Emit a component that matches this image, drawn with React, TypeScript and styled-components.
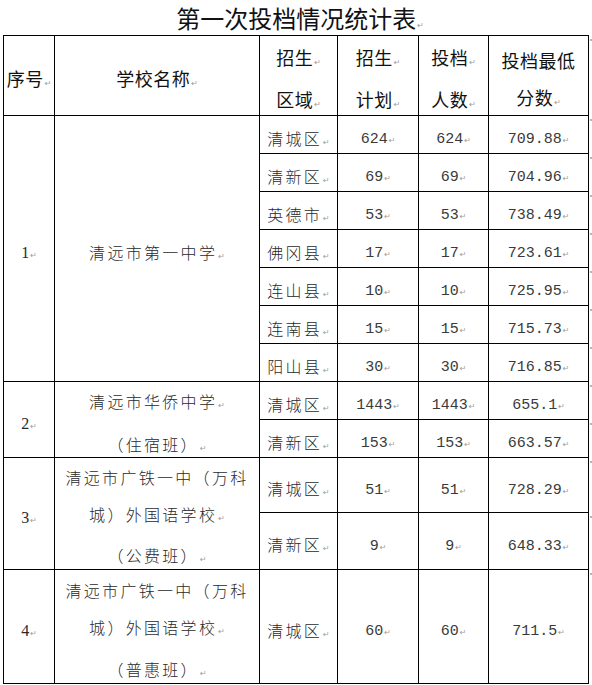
import { FC } from 'react';
import styled, { createGlobalStyle } from 'styled-components';

const GlobalStyle = createGlobalStyle`
  html, body {
    margin: 0;
    padding: 0;
    background: #ffffff;
  }
  body {
    font-family: "Noto Sans CJK SC", "Noto Sans", sans-serif;
    color: #222;
  }
`;

const Page = styled.div`
  width: 592px;
  height: 685px;
  overflow: hidden;
  background: #fff;
`;

const Title = styled.h1`
  margin: 0;
  height: 35px;
  line-height: 35px;
  text-align: center;
  font-size: 24px;
  font-weight: 400;
  color: #111;
  padding-left: 8px;
`;

const Sheet = styled.div`
  display: grid;
  grid-template-columns: 50px 204px 77px 80px 69px 99px;
  grid-template-rows: 79px repeat(9, 37px) 54px 56px 113px;
  gap: 1px;
  padding: 1px;
  margin-left: 3px;
  width: max-content;
  background: #000;
`;

type Kind = 'head' | 'text' | 'num' | 'seq';

const Cell = styled.div<{ $span?: number; $kind: Kind; $end?: boolean }>`
  position: relative;
  grid-row: span ${(p) => p.$span ?? 1};
  display: flex;
  flex-direction: column;
  align-items: center;
  justify-content: center;
  padding-top: 11px;
  background: #fff;
  white-space: nowrap;
  color: ${(p) => (p.$kind === 'head' ? '#111' : p.$kind === 'num' ? '#3a3a3a' : '#2a2a2a')};
  font-family: ${(p) =>
    p.$kind === 'num'
      ? '"Liberation Mono", monospace'
      : p.$kind === 'seq'
      ? '"Liberation Serif", serif'
      : '"Noto Sans CJK SC", sans-serif'};
  font-size: ${(p) =>
    p.$kind === 'head' ? '18px' : p.$kind === 'text' ? '16px' : p.$kind === 'seq' ? '16px' : '15px'};
  font-weight: ${(p) => (p.$kind === 'text' ? 300 : 400)};
  letter-spacing: ${(p) => (p.$kind === 'text' ? '2.3px' : p.$kind === 'head' ? '0.5px' : '0')};

  &::after {
    content: '';
    display: ${(p) => (p.$end ? 'block' : 'none')};
    position: absolute;
    right: -4px;
    top: 3px;
    width: 2px;
    height: 2px;
    background: #b5b5b5;
  }
`;

const Line = styled.div<{ $gap?: number }>`
  line-height: ${(p) => p.$gap ?? 37}px;
`;

const Mark = styled.span`
  font-family: "DejaVu Sans", sans-serif;
  font-size: 8px;
  font-weight: 400;
  letter-spacing: 0;
  color: #9c9c9c;
  margin-left: 1px;
`;

interface Group {
  seq: string;
  school: string[];
  lineGap: number;
  rows: string[][];
}

const groups: Group[] = [
  {
    seq: '1',
    school: ['清远市第一中学'],
    lineGap: 37,
    rows: [
      ['清城区', '624', '624', '709.88'],
      ['清新区', '69', '69', '704.96'],
      ['英德市', '53', '53', '738.49'],
      ['佛冈县', '17', '17', '723.61'],
      ['连山县', '10', '10', '725.95'],
      ['连南县', '15', '15', '715.73'],
      ['阳山县', '30', '30', '716.85'],
    ],
  },
  {
    seq: '2',
    school: ['清远市华侨中学', '（住宿班）'],
    lineGap: 39,
    rows: [
      ['清城区', '1443', '1443', '655.1'],
      ['清新区', '153', '153', '663.57'],
    ],
  },
  {
    seq: '3',
    school: ['清远市广铁一中（万科', '城）外国语学校', '（公费班）'],
    lineGap: 36.5,
    rows: [
      ['清城区', '51', '51', '728.29'],
      ['清新区', '9', '9', '648.33'],
    ],
  },
  {
    seq: '4',
    school: ['清远市广铁一中（万科', '城）外国语学校', '（普惠班）'],
    lineGap: 37.5,
    rows: [['清城区', '60', '60', '711.5']],
  },
];

// header cells; "投档最低" is a wrapped line, so no paragraph mark on it
const header: string[][] = [
  ['序号'],
  ['学校名称'],
  ['招生', '区域'],
  ['招生', '计划'],
  ['投档', '人数'],
  ['投档最低', '分数'],
];

const Para: FC<{ text: string; mark?: boolean; gap?: number }> = ({ text, mark = true, gap }) => (
  <Line $gap={gap}>
    {text}
    {mark && <Mark>↵</Mark>}
  </Line>
);

const App: FC = () => {
  return (
    <Page>
      <GlobalStyle />
      <Title>
        第一次投档情况统计表<Mark>↵</Mark>
      </Title>
      <Sheet>
        {header.map((lines, i) => (
          <Cell key={`h${i}`} $kind="head" $end={i === header.length - 1}>
            {lines.map((l, j) => (
              <Para key={j} text={l} mark={l !== '投档最低'} />
            ))}
          </Cell>
        ))}
        {groups.map((g) => [
          <Cell key={`s${g.seq}`} $kind="seq" $span={g.rows.length}>
            <Para text={g.seq} />
          </Cell>,
          <Cell key={`n${g.seq}`} $kind="text" $span={g.rows.length}>
            {g.school.map((l, j) => (
              <Para
                key={j}
                text={l}
                gap={g.lineGap}
                mark={!(g.school.length === 3 && j === 0)}
              />
            ))}
          </Cell>,
          ...g.rows.map((r, ri) => [
            <Cell key={`${g.seq}-${ri}-a`} $kind="text">
              <Para text={r[0]} />
            </Cell>,
            <Cell key={`${g.seq}-${ri}-b`} $kind="num">
              <Para text={r[1]} />
            </Cell>,
            <Cell key={`${g.seq}-${ri}-c`} $kind="num">
              <Para text={r[2]} />
            </Cell>,
            <Cell key={`${g.seq}-${ri}-d`} $kind="num" $end>
              <Para text={r[3]} />
            </Cell>,
          ]),
        ])}
      </Sheet>
    </Page>
  );
};

export default App;
